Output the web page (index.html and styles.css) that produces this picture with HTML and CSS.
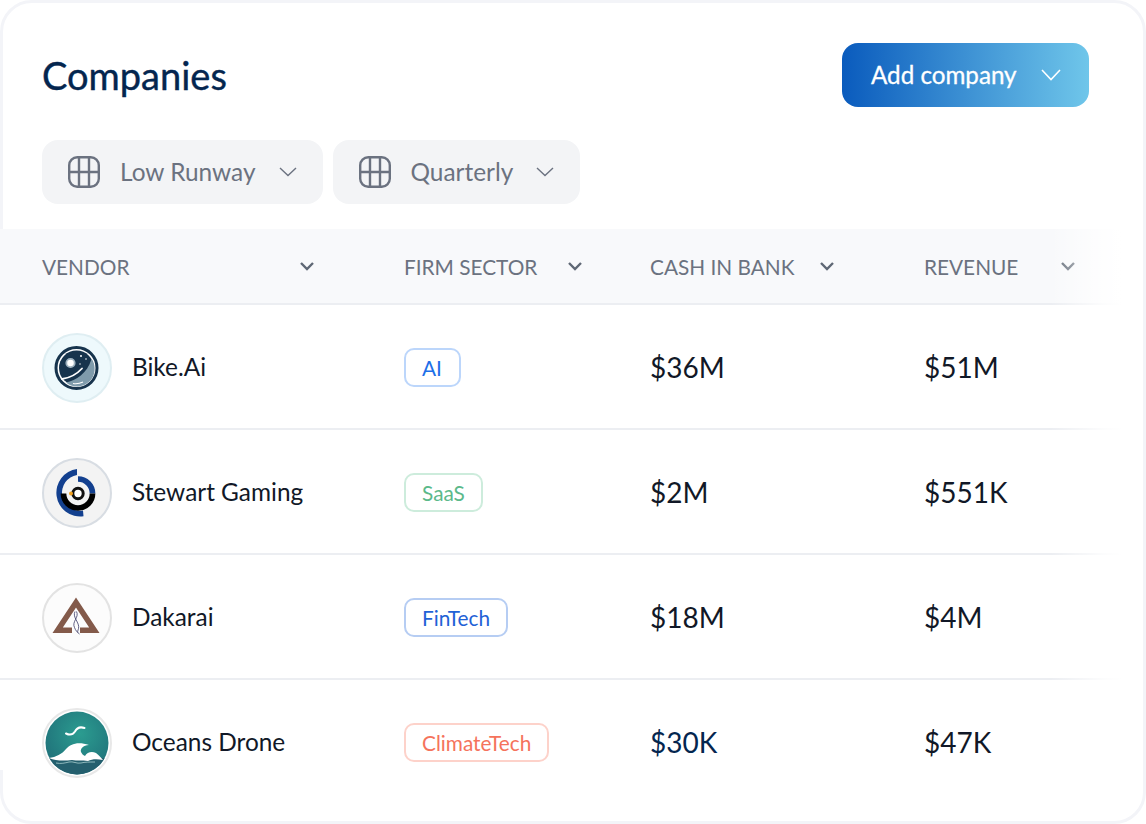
FILE: index.html
```html
<!DOCTYPE html>
<html lang="en">
<head>
    <meta charset="UTF-8">
    <title>Companies</title>
    <link rel="stylesheet" href="styles.css">
</head>
<body>
    <div class="card">
        <div class="top">
            <h1>Companies</h1>
            <button class="add-btn">
                <span>Add company</span>
                <svg class="chev-thin" width="20" height="12" viewBox="0 0 20 12"><path d="M1 1l9 9.500L19 1"/></svg>
            </button>
        </div>

        <div class="filters">
            <div class="filter">
                <svg class="grid-icon" width="32" height="32" viewBox="0 0 32 32"><rect x="1.200" y="1.200" width="29.600" height="29.600" rx="8"/><path d="M11 1v30M21 1v30M1 16h30"/></svg>
                <span>Low Runway</span>
                <svg class="chev-small" width="18" height="10" viewBox="0 0 18 10"><path d="M1 1l8 7.500L17 1"/></svg>
            </div>
            <div class="filter">
                <svg class="grid-icon" width="32" height="32" viewBox="0 0 32 32"><rect x="1.200" y="1.200" width="29.600" height="29.600" rx="8"/><path d="M11 1v30M21 1v30M1 16h30"/></svg>
                <span>Quarterly</span>
                <svg class="chev-small" width="18" height="10" viewBox="0 0 18 10"><path d="M1 1l8 7.500L17 1"/></svg>
            </div>
        </div>

        <div class="table">
            <div class="thead">
                <div class="th th-vendor">VENDOR <svg width="16" height="10" viewBox="0 0 16 10"><path d="M2 2l6 6 6-6"/></svg></div>
                <div class="th th-sector">FIRM SECTOR <svg width="16" height="10" viewBox="0 0 16 10"><path d="M2 2l6 6 6-6"/></svg></div>
                <div class="th th-cash">CASH IN BANK <svg width="16" height="10" viewBox="0 0 16 10"><path d="M2 2l6 6 6-6"/></svg></div>
                <div class="th th-revenue">REVENUE <svg width="16" height="10" viewBox="0 0 16 10"><path d="M2 2l6 6 6-6"/></svg></div>
            </div>

            <div class="row">
                <div class="vendor">
                    <div class="avatar avatar-bike">
                        <svg width="66" height="66" viewBox="2 2 66 66">
                            <circle cx="34.500" cy="35" r="20.500" fill="#fff" stroke="#17344d" stroke-width="3"/>
                            <circle cx="34.500" cy="35" r="17.500" fill="#17344d"/>
                            <path d="M24 49.500C34 47 45 41 49.500 26A17.500 17.500 0 0 1 24 49.500z" fill="#7f9bab"/>
                            <path d="M20 46c7-1 15-5 20-10.500" fill="none" stroke="#fff" stroke-width="1.800" stroke-linecap="round"/>
                            <path d="M31 50.500c3 .5 7 0 10-1.500" fill="none" stroke="#fff" stroke-width="1.200"/>
                            <circle cx="28.500" cy="30" r="4.200" fill="#fff" stroke="#9fb3c0" stroke-width="1.800"/>
                            <circle cx="39" cy="23" r="1" fill="#fff"/>
                            <circle cx="44" cy="26" r=".8" fill="#fff"/>
                            <circle cx="38" cy="31" r=".7" fill="#fff"/>
                        </svg>
                    </div>
                    <span>Bike.Ai</span>
                </div>
                <div><span class="chip chip-ai">AI</span></div>
                <div class="value">$36M</div>
                <div class="value">$51M</div>
            </div>

            <div class="row">
                <div class="vendor">
                    <div class="avatar avatar-stewart">
                        <svg width="66" height="66" viewBox="2 2 66 66">
                            <path d="M35 11A23.800 23.800 0 0 0 41.500 58.300L41 52.500A18 18 0 0 1 35 17z" fill="#13408f"/>
                            <path d="M36 21A14.500 14.500 0 0 1 50.500 35.500" fill="none" stroke="#13408f" stroke-width="5.700"/>
                            <path d="M21.500 35.500a14.500 14.500 0 0 0 29 0" fill="none" stroke="#000" stroke-width="5.700"/>
                            <circle cx="36" cy="35.500" r="5.200" fill="#fff" stroke="#111" stroke-width="3"/>
                            <circle cx="29" cy="35.500" r="2" fill="#f2a11f"/>
                        </svg>
                    </div>
                    <span>Stewart Gaming</span>
                </div>
                <div><span class="chip chip-saas">SaaS</span></div>
                <div class="value">$2M</div>
                <div class="value">$551K</div>
            </div>

            <div class="row">
                <div class="vendor">
                    <div class="avatar avatar-dakarai">
                        <svg width="66" height="66" viewBox="2 2 66 66">
                            <path d="M30 47.200H15.700L34 19.500 52.300 47.200H38" fill="none" stroke="#835a4a" stroke-width="5.600"/>
                            <path d="M33 28.500c-3 6 5 11 3.500 17-.5 2-1 3-1 4M34.500 28.500c3 6-5 10-2 16 1 3 3 5 5 6.500" fill="none" stroke="#3a3a66" stroke-width=".8"/>
                        </svg>
                    </div>
                    <span>Dakarai</span>
                </div>
                <div><span class="chip chip-fintech">FinTech</span></div>
                <div class="value">$18M</div>
                <div class="value">$4M</div>
            </div>

            <div class="row">
                <div class="vendor">
                    <div class="avatar avatar-oceans">
                        <svg width="66" height="66" viewBox="2 2 66 66">
                            <defs>
                                <radialGradient id="sea" cx="55%" cy="35%" r="70%">
                                    <stop offset="0" stop-color="#2b9c90"/>
                                    <stop offset="1" stop-color="#1f6e78"/>
                                </radialGradient>
                                <clipPath id="disc"><circle cx="35" cy="35" r="31.500"/></clipPath>
                            </defs>
                            <circle cx="35" cy="35" r="31.500" fill="url(#sea)"/>
                            <g clip-path="url(#disc)">
                                <rect x="0" y="50" width="70" height="20" fill="#245f6e"/>
                                <path d="M7 50C14 49 20 46 24 41 28 36 36 33 47 37 41 37 38 41 39 44 40 46 41 47 43 48 45 44 50 43 54 45 57 47 59 50 61 52 55 51 50 51 46 53 40 52 35 53 30 52 22 53 14 53 7 50Z" fill="#fff"/>
                                <path d="M14 55c5 1 9 0 13-1s8 2 12 1 8-1 14-1" fill="none" stroke="#a9cfd0" stroke-width=".8"/>
                            </g>
                            <path d="M24 25.500c4 2 7 1 9-2 2-4 5-5 9.500-3.500" fill="none" stroke="#fff" stroke-width="2" stroke-linecap="round"/>
                        </svg>
                    </div>
                    <span>Oceans Drone</span>
                </div>
                <div><span class="chip chip-climate">ClimateTech</span></div>
                <div class="value value-navy">$30K</div>
                <div class="value">$47K</div>
            </div>
        </div>
    </div>
</body>
</html>
```

FILE: styles.css
```css
* {
    box-sizing: border-box;
}

body {
    margin: 0;
    background: #fff;
    font-family: "Lato", "Liberation Sans", sans-serif;
}

.card {
    width: 1146px;
    height: 824px;
    border: 3px solid #f3f4f8;
    border-radius: 32px;
    background: #fff;
}

.top {
    display: flex;
    justify-content: space-between;
    align-items: center;
    height: 64px;
    margin-top: 40px;
    padding: 0 54px 0 39px;
}

h1 {
    margin: 0;
    font-size: 38px;
    font-weight: 400;
    color: #04264f;
    -webkit-text-stroke: 0.4px #04264f;
}

.add-btn {
    display: flex;
    align-items: center;
    justify-content: space-between;
    width: 247px;
    height: 64px;
    padding: 0 28px 0 29px;
    border: none;
    border-radius: 16px;
    background: linear-gradient(90deg, #0a5bbd, #6fc6ea);
    color: #fff;
    font-family: inherit;
    font-size: 24.200px;
    white-space: nowrap;
    -webkit-text-stroke: 0.3px #fff;
}

.add-btn span {
    margin-top: -2px;
}

.chev-thin path {
    fill: none;
    stroke: #fff;
    stroke-width: 1.600;
}

.filters {
    display: flex;
    gap: 10px;
    margin-top: 33px;
    padding-left: 39px;
}

.filter {
    display: flex;
    align-items: center;
    height: 64px;
    padding: 0 26px;
    border-radius: 16px;
    background: #f3f4f6;
    color: #6b7280;
    font-size: 24.400px;
}

.filter span {
    margin-top: -2px;
}

.grid-icon {
    margin-right: 20px;
}

.grid-icon rect,
.grid-icon path {
    fill: none;
    stroke: #6b7280;
    stroke-width: 2.400;
}

.chev-small {
    margin-left: 23px;
}

.chev-small path {
    fill: none;
    stroke: #6b7280;
    stroke-width: 1.400;
}

.table {
    position: relative;
    width: 1122px;
    height: 541px;
    margin: 25px 0 0 -3px;
    background: #fff;
}

/* fades the right end of the header and the row lines */
.table::after {
    content: "";
    position: absolute;
    top: 0;
    right: 0;
    bottom: 0;
    width: 72px;
    background: linear-gradient(90deg, rgba(255, 255, 255, 0), rgba(255, 255, 255, 0.45) 40%, rgba(255, 255, 255, 0.85) 75%, #fff);
}

.thead,
.row {
    display: grid;
    grid-template-columns: 404px 246px 274px 198px;
    align-items: center;
}

.thead {
    height: 76px;
    background: #f8f9fb;
    border-bottom: 2px solid #eceef2;
}

.th {
    display: flex;
    justify-content: space-between;
    align-items: center;
    font-size: 20.800px;
    color: #6b7280;
}

.th svg path {
    fill: none;
    stroke: #5f6875;
    stroke-width: 2.400;
}

.th-vendor {
    padding: 0 89px 0 42px;
}

.th-sector {
    padding-right: 67px;
}

.th-cash {
    padding-right: 89px;
}

.th-revenue {
    padding-right: 46px;
}

.row {
    padding: 28px 0 25px;
    border-bottom: 2px solid #eceef2;
}

.row:last-child {
    border-bottom: none;
}

.vendor {
    display: flex;
    align-items: center;
    gap: 20px;
    padding-left: 42px;
    font-size: 24.400px;
    color: #111827;
}

.vendor span {
    margin-top: -4px;
}

.avatar {
    display: flex;
    justify-content: center;
    align-items: center;
    width: 70px;
    height: 70px;
    border: 2px solid;
    border-radius: 50%;
}

.avatar-bike {
    background: #eef9fc;
    border-color: #dfeef2;
}

.avatar-stewart {
    background: #f3f3f3;
    border-color: #d8dde3;
}

.avatar-dakarai {
    background: #fcfcfc;
    border-color: #e3e3e3;
}

.avatar-oceans {
    background: #fff;
    border-color: #e8e8e8;
}

.chip {
    display: inline-block;
    min-width: 57px;
    height: 39px;
    margin-bottom: 2px;
    padding: 0 16px;
    border: 2px solid;
    border-radius: 10px;
    font-size: 20.800px;
    line-height: 35px;
}

.chip-ai {
    color: #1d6fe8;
    border-color: #bcd6fb;
}

.chip-saas {
    color: #5bb98a;
    border-color: #cdecdc;
}

.chip-fintech {
    color: #1f62d6;
    border-color: #b6cdf3;
}

.chip-climate {
    color: #f5735c;
    border-color: #fdd2ca;
}

.value {
    margin-top: -2px;
    font-size: 28px;
    color: #111827;
}

.value-navy {
    color: #04264f;
}
```
